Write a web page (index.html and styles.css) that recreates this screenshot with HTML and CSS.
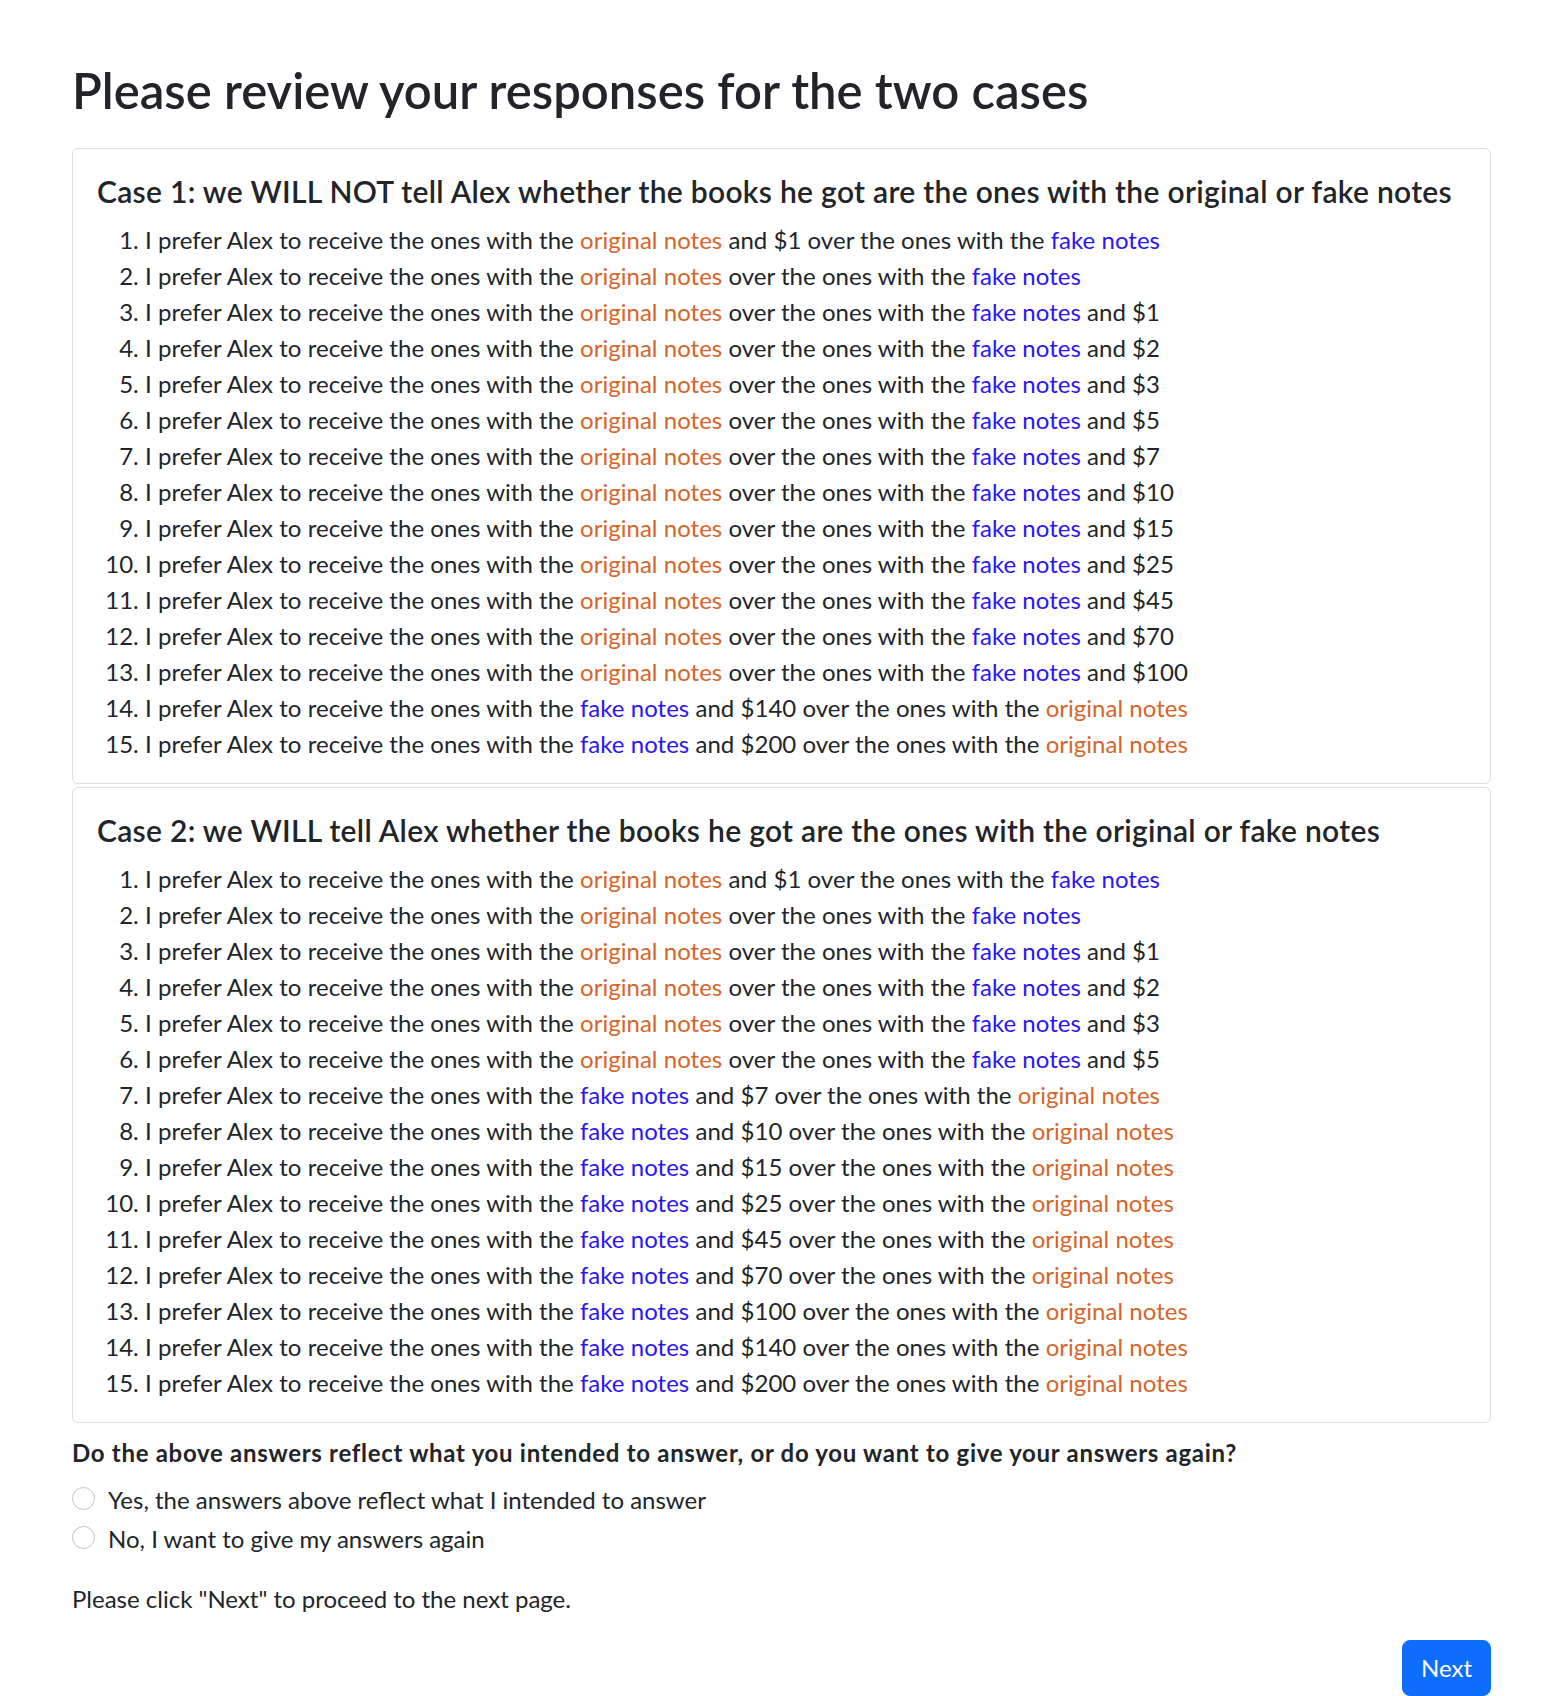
FILE: index.html
```html
<!DOCTYPE html>
<html lang="en">
<head>
<meta charset="utf-8">
<title>Review your responses</title>
<link rel="stylesheet" href="styles.css">
</head>
<body>
<main class="page">
  <h1 class="title">Please review your responses for the two cases</h1>

  <section class="card">
    <h5 class="card-title">Case 1: we WILL NOT tell Alex whether the books he got are the ones with the original or fake notes</h5>
    <ol class="items">
      <li>I prefer Alex to receive the ones with the <span class="orig">original notes</span> and $1 over the ones with the <span class="fake">fake notes</span></li>
      <li>I prefer Alex to receive the ones with the <span class="orig">original notes</span> over the ones with the <span class="fake">fake notes</span></li>
      <li>I prefer Alex to receive the ones with the <span class="orig">original notes</span> over the ones with the <span class="fake">fake notes</span> and $1</li>
      <li>I prefer Alex to receive the ones with the <span class="orig">original notes</span> over the ones with the <span class="fake">fake notes</span> and $2</li>
      <li>I prefer Alex to receive the ones with the <span class="orig">original notes</span> over the ones with the <span class="fake">fake notes</span> and $3</li>
      <li>I prefer Alex to receive the ones with the <span class="orig">original notes</span> over the ones with the <span class="fake">fake notes</span> and $5</li>
      <li>I prefer Alex to receive the ones with the <span class="orig">original notes</span> over the ones with the <span class="fake">fake notes</span> and $7</li>
      <li>I prefer Alex to receive the ones with the <span class="orig">original notes</span> over the ones with the <span class="fake">fake notes</span> and $10</li>
      <li>I prefer Alex to receive the ones with the <span class="orig">original notes</span> over the ones with the <span class="fake">fake notes</span> and $15</li>
      <li>I prefer Alex to receive the ones with the <span class="orig">original notes</span> over the ones with the <span class="fake">fake notes</span> and $25</li>
      <li>I prefer Alex to receive the ones with the <span class="orig">original notes</span> over the ones with the <span class="fake">fake notes</span> and $45</li>
      <li>I prefer Alex to receive the ones with the <span class="orig">original notes</span> over the ones with the <span class="fake">fake notes</span> and $70</li>
      <li>I prefer Alex to receive the ones with the <span class="orig">original notes</span> over the ones with the <span class="fake">fake notes</span> and $100</li>
      <li>I prefer Alex to receive the ones with the <span class="fake">fake notes</span> and $140 over the ones with the <span class="orig">original notes</span></li>
      <li>I prefer Alex to receive the ones with the <span class="fake">fake notes</span> and $200 over the ones with the <span class="orig">original notes</span></li>
    </ol>
  </section>

  <section class="card card-next">
    <h5 class="card-title">Case 2: we WILL tell Alex whether the books he got are the ones with the original or fake notes</h5>
    <ol class="items">
      <li>I prefer Alex to receive the ones with the <span class="orig">original notes</span> and $1 over the ones with the <span class="fake">fake notes</span></li>
      <li>I prefer Alex to receive the ones with the <span class="orig">original notes</span> over the ones with the <span class="fake">fake notes</span></li>
      <li>I prefer Alex to receive the ones with the <span class="orig">original notes</span> over the ones with the <span class="fake">fake notes</span> and $1</li>
      <li>I prefer Alex to receive the ones with the <span class="orig">original notes</span> over the ones with the <span class="fake">fake notes</span> and $2</li>
      <li>I prefer Alex to receive the ones with the <span class="orig">original notes</span> over the ones with the <span class="fake">fake notes</span> and $3</li>
      <li>I prefer Alex to receive the ones with the <span class="orig">original notes</span> over the ones with the <span class="fake">fake notes</span> and $5</li>
      <li>I prefer Alex to receive the ones with the <span class="fake">fake notes</span> and $7 over the ones with the <span class="orig">original notes</span></li>
      <li>I prefer Alex to receive the ones with the <span class="fake">fake notes</span> and $10 over the ones with the <span class="orig">original notes</span></li>
      <li>I prefer Alex to receive the ones with the <span class="fake">fake notes</span> and $15 over the ones with the <span class="orig">original notes</span></li>
      <li>I prefer Alex to receive the ones with the <span class="fake">fake notes</span> and $25 over the ones with the <span class="orig">original notes</span></li>
      <li>I prefer Alex to receive the ones with the <span class="fake">fake notes</span> and $45 over the ones with the <span class="orig">original notes</span></li>
      <li>I prefer Alex to receive the ones with the <span class="fake">fake notes</span> and $70 over the ones with the <span class="orig">original notes</span></li>
      <li>I prefer Alex to receive the ones with the <span class="fake">fake notes</span> and $100 over the ones with the <span class="orig">original notes</span></li>
      <li>I prefer Alex to receive the ones with the <span class="fake">fake notes</span> and $140 over the ones with the <span class="orig">original notes</span></li>
      <li>I prefer Alex to receive the ones with the <span class="fake">fake notes</span> and $200 over the ones with the <span class="orig">original notes</span></li>
    </ol>
  </section>

  <p class="question">Do the above answers reflect what you intended to answer, or do you want to give your answers again?</p>
  <div class="choices">
    <label class="choice"><input class="radio" type="radio" name="confirm" value="yes"><span>Yes, the answers above reflect what I intended to answer</span></label>
    <label class="choice"><input class="radio" type="radio" name="confirm" value="no"><span>No, I want to give my answers again</span></label>
  </div>
  <p class="proceed">Please click "Next" to proceed to the next page.</p>
  <div class="actions">
    <button class="btn-next" type="button">Next</button>
  </div>
</main>
</body>
</html>
```
FILE: styles.css
```css
html, body {
  margin: 0;
  padding: 0;
  background: #ffffff;
}

body {
  font-family: Lato, "Liberation Sans", Arial, sans-serif;
  font-size: 24px;
  line-height: 36px;
  color: #212529;
}

.page {
  padding: 60px 69px 0 72px;
  display: flex;
  flex-direction: column;
}

.title {
  margin: 0 0 28px 0;
  font-size: 49px;
  line-height: 60px;
  font-weight: 600;
  white-space: nowrap;
}

.card {
  border: 1px solid #dedede;
  border-radius: 6px;
  padding: 24px 24px 21px 24px;
}

.card-next {
  margin-top: 3px;
}

.card-title {
  margin: 0 0 13px 0;
  font-size: 30px;
  line-height: 36px;
  font-weight: 600;
  letter-spacing: 0.3px;
  white-space: nowrap;
}

.items {
  margin: 0;
  padding: 0 0 0 48px;
}

.items li {
  white-space: nowrap;
  letter-spacing: 0.03px;
}

.orig {
  color: #d6652a;
}

.fake {
  color: #2a16f2;
}

.question {
  margin: 12px 0 11px 0;
  font-weight: 700;
  letter-spacing: 0.7px;
  white-space: nowrap;
}

.choices {
  display: flex;
  flex-direction: column;
  gap: 3px;
}

.choice {
  display: flex;
  align-items: flex-start;
  height: 36px;
}

.radio {
  appearance: none;
  -webkit-appearance: none;
  flex: 0 0 auto;
  width: 23px;
  height: 23px;
  margin: 5px 13px 0 0;
  border: 1px solid #c2c2c2;
  border-radius: 50%;
  background: #fff;
  box-sizing: border-box;
}

.proceed {
  margin: 24px 0 23px 0;
}

.actions {
  display: flex;
  justify-content: flex-end;
}

.btn-next {
  font-family: inherit;
  font-size: 24px;
  line-height: 36px;
  padding: 9px 18px;
  border: 1px solid #0d6efd;
  border-radius: 8px;
  background: #0d6efd;
  color: #ffffff;
}
```
